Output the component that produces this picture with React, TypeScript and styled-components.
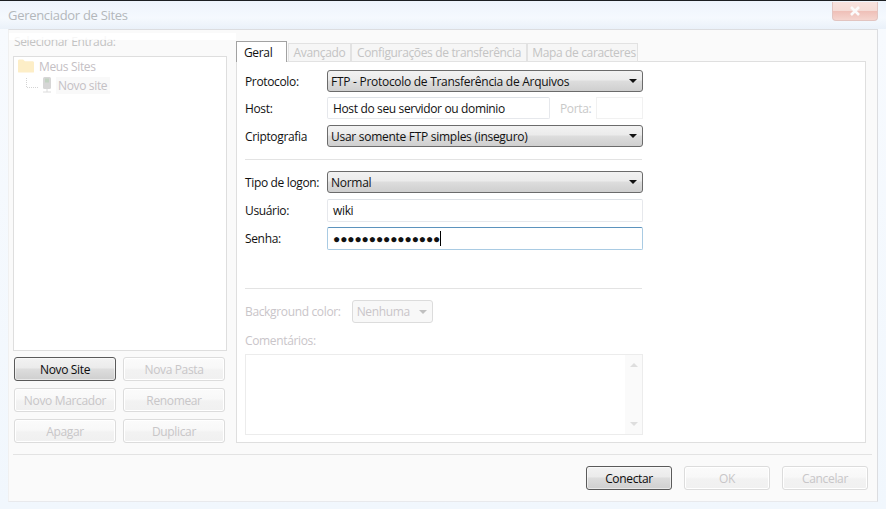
import React from "react";
import styled, { createGlobalStyle } from "styled-components";

const Global = createGlobalStyle`
  html, body { margin: 0; padding: 0; background: #f3f8fe; }
  * { box-sizing: border-box; }
`;

const Win = styled.div`
  width: 886px;
  height: 509px;
  overflow: hidden;
  display: flex;
  flex-direction: column;
  font-family: "Open Sans", "Noto Sans", "Liberation Sans", sans-serif;
  font-size: 12px;
  letter-spacing: -0.35px;
  color: #111;
  background: linear-gradient(180deg, #f0f6fd 0, #f7fafe 30px, #f1f7fd 100%);
  border-top: 1px solid #1c1f22;
`;

const TitleBar = styled.div`
  height: 28px;
  flex: none;
  display: flex;
  align-items: flex-start;
  justify-content: space-between;
  padding: 0 8px;
  background: linear-gradient(180deg, #eef4fc, #f5f9fe 60%, #eaf1f9);
`;

const Title = styled.div`
  margin-top: 5px;
  font-size: 13px;
  letter-spacing: -0.3px;
  color: #b3b7bb;
`;

const Close = styled.div`
  width: 46px;
  height: 19px;
  margin-top: 1px;
  border: 1px solid #e2c4c0;
  border-top: none;
  border-radius: 0 0 4px 4px;
  background: linear-gradient(180deg, #f7e2de 0, #f5dcd7 48%, #efc0b8 52%, #f5d5cf 100%);
  display: flex;
  align-items: center;
  justify-content: center;
`;

const Client = styled.div`
  flex: none;
  height: 473px;
  margin: 0 8px;
  display: flex;
  flex-direction: column;
  background: #fafafa;
  border: 1px solid #dcdde0;
  border-left-color: #f0f0f0;
  border-bottom-color: #e8e9ec;
`;

const Body = styled.div`
  display: flex;
  height: 413px;
`;

const LeftCol = styled.div`
  position: relative;
  width: 227px;
  flex: none;
  padding: 3px 0 0 4px;
  display: flex;
  flex-direction: column;
  &::before {
    content: "";
    position: absolute;
    left: 0;
    right: 0;
    top: 3px;
    height: 7px;
    background: rgba(255, 255, 255, 0.85);
  }
`;

const EntryLabel = styled.div`
  height: 23px;
  padding: 0 0 0 1px;
  color: #c3c3c3;
`;

const Tree = styled.div`
  width: 214px;
  height: 295px;
  background: #fff;
  border: 1px solid #dedede;
  padding: 0 4px;
  color: #c4c0c4;
`;

const TreeRow = styled.div<{ $child?: boolean }>`
  display: flex;
  align-items: center;
  height: 18px;
  gap: ${(p) => (p.$child ? "4px" : "5px")};
  margin: ${(p) => (p.$child ? "1px 0 0 8px" : "0")};
`;

const TreeSel = styled.span`
  background: #f9f9f9;
  padding: 0 3px 0 2px;
  line-height: 17px;
`;

const ButtonGrid = styled.div`
  display: grid;
  grid-template-columns: 102px 102px;
  grid-auto-rows: 24px;
  column-gap: 7px;
  row-gap: 7px;
  margin: 6px 0 0 1px;
`;

const Btn = styled.div<{ $primary?: boolean; $w?: number }>`
  display: flex;
  align-items: center;
  justify-content: center;
  height: 24px;
  width: ${(p) => (p.$w ? `${p.$w}px` : "auto")};
  border-radius: 3px;
  border: 1px solid ${(p) => (p.$primary ? "#5a5a5a" : "#dcdcdc")};
  color: ${(p) => (p.$primary ? "#0c0c0c" : "#c8c6c8")};
  background: ${(p) =>
    p.$primary
      ? "linear-gradient(180deg, #f2f2f2 0, #ebebeb 45%, #dddddd 50%, #cfcfcf 100%)"
      : "linear-gradient(180deg, #fbfbfb 0, #f8f8f8 45%, #f2f2f2 55%, #f0f0f0 100%)"};
  box-shadow: ${(p) => (p.$primary ? "inset 0 0 0 1px #fff8" : "inset 0 0 0 1px #fff")};
`;

const RightCol = styled.div`
  width: 630px;
  flex: none;
  padding-top: 11px;
  display: flex;
  flex-direction: column;
`;

const Tabs = styled.div`
  display: flex;
  height: 21px;
  align-items: flex-end;
  margin-bottom: -1px;
  position: relative;
  z-index: 1;
`;

const ActiveTab = styled.div`
  width: 51px;
  height: 21px;
  padding: 1px 0 0 7px;
  display: flex;
  align-items: center;
  background: #fff;
  border: 1px solid #a2a2a2;
  border-bottom: none;
`;

const Tab = styled.div<{ $w: number; $pl?: number; $gap?: boolean }>`
  width: ${(p) => p.$w}px;
  height: 19px;
  margin-left: ${(p) => (p.$gap ? "1px" : "0")};
  padding-left: ${(p) => p.$pl ?? 0}px;
  display: flex;
  align-items: center;
  justify-content: center;
  white-space: nowrap;
  background: #f6f6f6;
  border: 1px solid #e2e2e2;
  color: #c4c4c4;
`;

const Panel = styled.div`
  width: 630px;
  height: 382px;
  background: #fff;
  border: 1px solid #dfdfdf;
  padding: 8px 222px 0 8px;
`;

const Row = styled.div<{ $h?: number; $mb?: number }>`
  display: flex;
  align-items: center;
  height: ${(p) => p.$h ?? 22}px;
  margin-bottom: ${(p) => p.$mb ?? 5}px;
`;

const Label = styled.div`
  width: 82px;
  flex: none;
  color: #111;
`;

const Select = styled.div`
  flex: 1;
  height: 100%;
  letter-spacing: -0.28px;
  border: 1px solid #6b6b6b;
  border-radius: 3px;
  padding: 0 5px 0 3px;
  display: flex;
  align-items: center;
  justify-content: space-between;
  background: linear-gradient(180deg, #f2f2f2 0, #ebebeb 45%, #dddddd 50%, #cfcfcf 100%);
`;

const Caret = styled.span<{ $off?: boolean }>`
  width: 0;
  height: 0;
  border-left: 4px solid transparent;
  border-right: 4px solid transparent;
  border-top: 4px solid ${(p) => (p.$off ? "#c0c0c0" : "#111")};
`;

const Input = styled.div<{ $w?: number; $focus?: boolean }>`
  ${(p) => (p.$w ? `width: ${p.$w}px;` : "flex: 1;")}
  flex-shrink: 0;
  height: 100%;
  padding: 0 5px;
  display: flex;
  align-items: center;
  background: #fff;
  border: 1px solid ${(p) => (p.$focus ? "#5c93bd" : "#dde1e6")};
  border-bottom-color: ${(p) => (p.$focus ? "#a9cbe3" : "#e6e8ec")};
  border-left-color: ${(p) => (p.$focus ? "#a9cbe3" : "#e6e8ec")};
  border-right-color: ${(p) => (p.$focus ? "#a9cbe3" : "#e6e8ec")};
  border-radius: 2px;
`;

const PortLabel = styled.span`
  margin: 0 5px 0 10px;
  color: #c9c9c9;
`;

const PortInput = styled.div`
  flex: 1;
  height: 100%;
  border: 1px solid #f1f1f1;
`;

const Dots = styled.span`
  font-family: "Liberation Sans", sans-serif;
  font-size: 12px;
  letter-spacing: -0.1px;
  line-height: 1;
`;

const Cursor = styled.span`
  width: 1px;
  height: 15px;
  background: #000;
`;

const Sep = styled.div<{ $mt: number; $mb: number }>`
  height: 1px;
  background: #e3e3e3;
  margin: ${(p) => p.$mt}px 1px ${(p) => p.$mb}px 0;
`;

const ColorRow = styled.div`
  display: flex;
  align-items: center;
  height: 23px;
  color: #c9c5c9;
`;

const ColorSelect = styled.div`
  width: 81px;
  height: 23px;
  margin-left: 11px;
  flex: none;
  padding: 0 5px 0 4px;
  display: flex;
  align-items: center;
  justify-content: space-between;
  border: 1px solid #dcdcdc;
  border-radius: 3px;
  background: #f8f8f8;
`;

const CommentLabel = styled.div`
  color: #c9c5c9;
  margin: 9px 0 5px;
  line-height: 17px;
`;

const Comments = styled.div`
  height: 81px;
  border: 1px solid #ececec;
  display: flex;
  justify-content: flex-end;
`;

const ScrollBar = styled.div`
  width: 17px;
  padding: 8px 0;
  background: #fafafa;
  display: flex;
  flex-direction: column;
  align-items: center;
  justify-content: space-between;
`;

const ArrowUp = styled.span`
  border-left: 4px solid transparent;
  border-right: 4px solid transparent;
  border-bottom: 4px solid #dedede;
`;

const ArrowDown = styled.span`
  border-left: 4px solid transparent;
  border-right: 4px solid transparent;
  border-top: 4px solid #dedede;
`;

const FooterLine = styled.div`
  height: 1px;
  margin: 11px 5px 0 4px;
  background: #e3e3e3;
`;

const Footer = styled.div`
  display: flex;
  justify-content: flex-end;
  gap: 12px;
  padding: 11px 9px 0 0;
`;

const FolderIcon = () => (
  <svg width="16" height="14" viewBox="0 0 17 14">
    <path d="M0 3V1.5C0 .7.6 0 1.4 0h4l2 2h8C16.300 2 17 2.700 17 3.500V13c0 .6-.5 1-1 1H1c-.6 0-1-.4-1-1z" fill="#fdeec7" />
  </svg>
);

const Connector = () => (
  <svg width="12" height="14" viewBox="0 0 12 14">
    <path d="M.5 0v9.500H12" stroke="#d4d4d4" strokeDasharray="1 1" fill="none" />
  </svg>
);

const ServerIcon = () => (
  <svg width="10" height="16" viewBox="0 0 10 16">
    <rect x="1" y="0" width="8" height="12" rx="1.500" fill="#d6d6d6" />
    <rect x="3" y="1.500" width="4" height="4" fill="#c2d2c2" />
    <path d="M5 12v3M1 15h8" stroke="#dcdcdc" />
  </svg>
);

const CloseGlyph = () => (
  <svg width="12" height="10" viewBox="0 0 12 10">
    <path d="M2 1l8 8M10 1L2 9" stroke="#fbfbfb" strokeWidth="2.600" />
  </svg>
);

export default function App() {
  return (
    <Win>
      <Global />
      <TitleBar>
        <Title>Gerenciador de Sites</Title>
        <Close><CloseGlyph /></Close>
      </TitleBar>
      <Client>
        <Body>
          <LeftCol>
            <EntryLabel>Selecionar Entrada:</EntryLabel>
            <Tree>
              <TreeRow><FolderIcon />Meus Sites</TreeRow>
              <TreeRow $child><Connector /><ServerIcon /><TreeSel>Novo site</TreeSel></TreeRow>
            </Tree>
            <ButtonGrid>
              <Btn $primary>Novo Site</Btn>
              <Btn>Nova Pasta</Btn>
              <Btn>Novo Marcador</Btn>
              <Btn>Renomear</Btn>
              <Btn>Apagar</Btn>
              <Btn>Duplicar</Btn>
            </ButtonGrid>
          </LeftCol>
          <RightCol>
            <Tabs>
              <ActiveTab>Geral</ActiveTab>
              <Tab $w={63} $gap>Avançado</Tab>
              <Tab $w={176}>Configurações de transferência</Tab>
              <Tab $w={111} $pl={3}>Mapa de caracteres</Tab>
            </Tabs>
            <Panel>
              <Row>
                <Label>Protocolo:</Label>
                <Select>FTP - Protocolo de Transferência de Arquivos<Caret /></Select>
              </Row>
              <Row $mb={6}>
                <Label>Host:</Label>
                <Input $w={223}>Host do seu servidor ou dominio</Input>
                <PortLabel>Porta:</PortLabel>
                <PortInput />
              </Row>
              <Row>
                <Label>Criptografia</Label>
                <Select>Usar somente FTP simples (inseguro)<Caret /></Select>
              </Row>
              <Sep $mt={12} $mb={11} />
              <Row $mb={6}>
                <Label>Tipo de logon:</Label>
                <Select>Normal<Caret /></Select>
              </Row>
              <Row $h={23}>
                <Label>Usuário:</Label>
                <Input>wiki</Input>
              </Row>
              <Row $h={23} $mb={0}>
                <Label>Senha:</Label>
                <Input $focus><Dots>●●●●●●●●●●●●●●●</Dots><Cursor /></Input>
              </Row>
              <Sep $mt={38} $mb={11} />
              <ColorRow>
                Background color:
                <ColorSelect>Nenhuma<Caret $off /></ColorSelect>
              </ColorRow>
              <CommentLabel>Comentários:</CommentLabel>
              <Comments>
                <ScrollBar><ArrowUp /><ArrowDown /></ScrollBar>
              </Comments>
            </Panel>
          </RightCol>
        </Body>
        <FooterLine />
        <Footer>
          <Btn $primary $w={86}>Conectar</Btn>
          <Btn $w={86}>OK</Btn>
          <Btn $w={86}>Cancelar</Btn>
        </Footer>
      </Client>
    </Win>
  );
}
